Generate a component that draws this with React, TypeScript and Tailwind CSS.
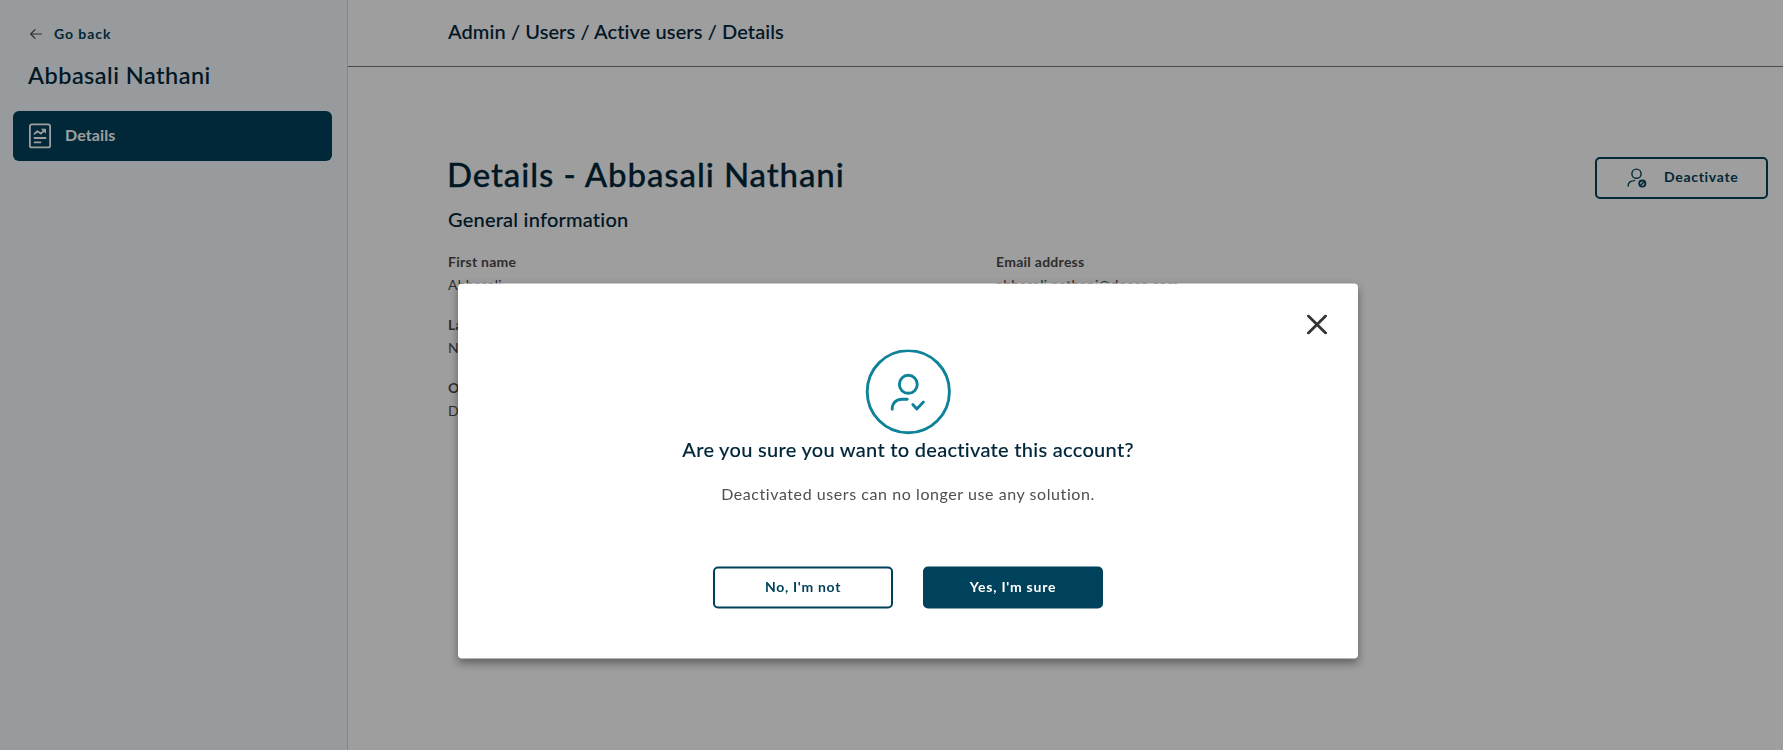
import React from "react";

const columns = [
  [
    { label: "First name", value: "Abbasali" },
    { label: "Last name", value: "Nathani" },
    { label: "Organization", value: "Docco" },
  ],
  [{ label: "Email address", value: "abbasali.nathani@docco.com" }],
];

const ArrowLeft = () => (
  <svg width="13" height="12" viewBox="0 0 13 12" fill="none" stroke="#4b4b4d" strokeWidth="1.2" strokeLinecap="round" strokeLinejoin="round">
    <path d="M11.5 6H0.7M5 1.6L0.7 6 5 10.4" />
  </svg>
);

const ReportIcon = () => (
  <svg width="22" height="26" viewBox="0 0 22 26" fill="none" stroke="white" strokeWidth="1.8" strokeLinecap="round" strokeLinejoin="round">
    <rect x="0.9" y="1.4" width="20.2" height="23" rx="2" />
    <path d="M5.5 10.8l2.8-2.6 3.5 2.4 3.6-3.2M5.5 15h11M5.5 19.3h6" />
    <path d="M13 6.2h3.5v3.4z" fill="white" strokeWidth="1" />
  </svg>
);

const UserBlockedIcon = () => (
  <svg width="20" height="20" viewBox="0 0 20 20" fill="none" stroke="#00425b" strokeWidth="1.4" strokeLinecap="round">
    <circle cx="9.5" cy="5.7" r="4.6" />
    <path d="M1.1 18c0-3.6 2.2-5.4 6.6-5.4" />
    <circle cx="15.3" cy="15.6" r="3.1" strokeWidth="1.8" />
    <path d="M13.4 17.5l3.8-3.8" strokeWidth="1.5" />
  </svg>
);

const UserCheckIcon = () => (
  <svg width="86" height="86" viewBox="0 0 86 86" fill="none" stroke="#0d8299" strokeWidth="2.9" strokeLinecap="round" strokeLinejoin="round">
    <circle cx="43.3" cy="42.2" r="41.1" />
    <circle cx="43.3" cy="34.8" r="9" />
    <path d="M27.2 59.8c0-6.6 4-10 10.2-10h4.8M47.8 55l4 4.4 6.6-6.8" />
  </svg>
);

const CloseIcon = () => (
  <svg width="20" height="20" viewBox="0 0 20 20" fill="none" stroke="#333436" strokeWidth="2.8" strokeLinecap="round">
    <path d="M1.4 1.4l17.2 17.2M18.6 1.4L1.4 18.6" />
  </svg>
);

const Sidebar = () => (
  <aside className="w-[348px] shrink-0 border-r border-[#d8d8d8] bg-[#f4faff] pr-[15px] pl-[13px]">
    <button className="mt-6 ml-[17px] flex h-5 items-center text-[14px] font-bold tracking-[0.95px] text-[#00425b]">
      <ArrowLeft />
      <span className="ml-[11px] pb-px">Go back</span>
    </button>
    <h2 className="mt-[15px] ml-[15px] text-[23.5px] leading-[32px] font-medium tracking-[0.5px] text-[#00263a] [-webkit-text-stroke:0.12px]">
      Abbasali Nathani
    </h2>
    <nav className="mt-5">
      <a className="flex h-[50px] items-center rounded-md bg-[#00425b] pl-4 text-[16px] font-bold tracking-[0.1px] text-white">
        <ReportIcon />
        <span className="ml-[14px] pb-0.5">Details</span>
      </a>
    </nav>
  </aside>
);

const DeactivateModal = () => (
  <div className="fixed inset-0 flex items-start justify-center bg-black/38 pt-[283px] pl-[33px]">
    <div className="flex h-[375px] w-[900px] translate-y-[0.5px] flex-col items-center rounded bg-white shadow-[0_4px_10px_rgba(0,0,0,0.42)]">
      <div className="flex w-full justify-end pt-[31px] pr-[31px]">
        <button>
          <CloseIcon />
        </button>
      </div>
      <div className="mt-[15px]">
        <UserCheckIcon />
      </div>
      <h3 className="-mt-0.5 text-[20px] leading-[30px] font-medium tracking-[0.29px] text-[#00263a] [-webkit-text-stroke:0.1px]">
        Are you sure you want to deactivate this account?
      </h3>
      <p className="mt-[18px] text-[16px] leading-6 tracking-[0.57px] text-[#4f4f51]">
        Deactivated users can no longer use any solution.
      </p>
      <div className="mt-[61px] flex gap-[30px] text-[14px] font-bold tracking-[0.7px]">
        <button className="h-[42px] w-[180px] rounded-[5px] border-2 border-[#00425b] pb-1 text-[#00425b]">
          No, I'm not
        </button>
        <button className="h-[42px] w-[180px] rounded-[5px] bg-[#00425b] pb-1 tracking-[0.75px] text-white">
          Yes, I'm sure
        </button>
      </div>
    </div>
  </div>
);

const App = () => {
  return (
    <div className="flex h-screen overflow-hidden bg-white font-[Lato,sans-serif]">
      <Sidebar />
      <main className="flex-1">
        <header className="flex h-[67px] items-center border-b border-[#77777a] pb-[5px] pl-[100px] text-[20px] font-medium tracking-[0.1px] text-[#00263a] [-webkit-text-stroke:0.1px]">
          Admin / Users / Active users / Details
        </header>
        <section className="pt-[90px] pr-[15px] pl-[100px]">
          <div className="flex justify-between">
            <h1 className="-mt-[3px] -ml-px text-[33px] leading-[40px] font-medium tracking-[0.9px] text-[#00263a] [-webkit-text-stroke:0.3px]">
              Details - Abbasali Nathani
            </h1>
            <button className="flex h-[42px] w-[173px] items-center rounded-[5px] border-2 border-[#00425b] pl-[30px] text-[14px] font-bold tracking-[0.7px] text-[#00425b]">
              <UserBlockedIcon />
              <span className="ml-[17px] pb-[3px]">Deactivate</span>
            </button>
          </div>
          <h2 className="mt-[5px] text-[20px] leading-[30px] font-medium tracking-[0.22px] text-[#00263a] [-webkit-text-stroke:0.1px]">
            General information
          </h2>
          <div className="mt-4 grid grid-cols-[548px_1fr]">
            {columns.map((fields, i) => (
              <dl key={i}>
                {fields.map((field) => (
                  <div key={field.label} className="mb-[17px] text-[14px] leading-[23px] tracking-[0.27px] text-[#4b4b4d]">
                    <dt className="font-bold">{field.label}</dt>
                    <dd>{field.value}</dd>
                  </div>
                ))}
              </dl>
            ))}
          </div>
        </section>
      </main>
      <DeactivateModal />
    </div>
  );
};

export default App;
